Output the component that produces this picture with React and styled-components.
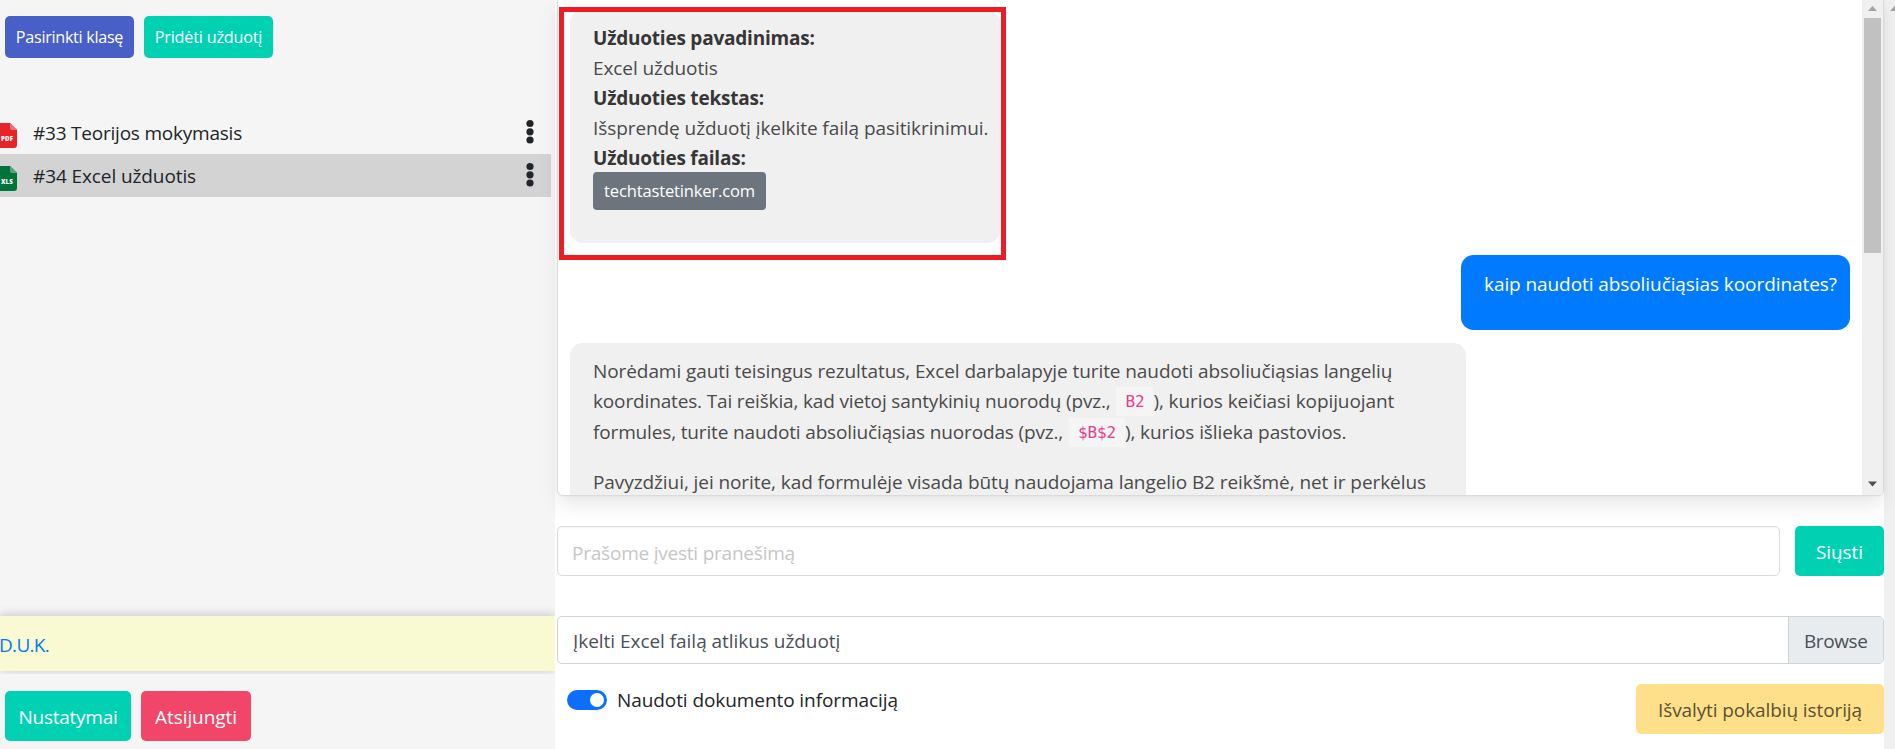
import React from "react";
import styled, { createGlobalStyle, css } from "styled-components";

const GlobalStyle = createGlobalStyle`
  *, *::before, *::after { box-sizing: border-box; }
  html, body { margin: 0; height: 100%; overflow: hidden; }
  body {
    background: #fff;
    color: #212529;
    font: 400 19px/30px "Open Sans", "Noto Sans", sans-serif;
    letter-spacing: -0.08px;
  }
  p { margin: 0; }
`;

const Page = styled.div`
  display: grid;
  grid-template-columns: 555px 1fr 11px;
  width: 100vw;
  height: 749px;
  overflow: hidden;
`;

const Sidebar = styled.aside`
  display: flex;
  flex-direction: column;
  background: #f5f5f5;
`;

const Toolbar = styled.div`
  display: flex;
  gap: 10px;
  padding: 16px 5px 0;
`;

const tones = {
  link: css`background: #485fc7; color: #fff;`,
  primary: css`background: #00d1b2; color: #fff;`,
  danger: css`background: #f14668; color: #fff;`,
  warning: css`background: #ffe08a; color: #5c5030;`,
};

const Button = styled.button`
  display: flex;
  align-items: center;
  justify-content: center;
  flex: none;
  width: ${(p) => p.$width}px;
  height: ${(p) => (p.$small ? 42 : 50)}px;
  padding: ${(p) => (p.$small ? 0 : "1px 0 0")};
  border: 0;
  border-radius: 5px;
  font: inherit;
  font-size: ${(p) => (p.$small ? 16.2 : 19)}px;
  letter-spacing: ${(p) => p.$tracking ?? -0.08}px;
  white-space: nowrap;
  ${(p) => tones[p.$tone]}
`;

const TaskList = styled.ul`
  flex: 1;
  margin: 54px 0 0;
  padding: 0;
  list-style: none;
`;

const Task = styled.li`
  display: flex;
  align-items: center;
  width: 551px;
  height: ${(p) => (p.$selected ? 43 : 42)}px;
  padding-right: 16px;
  letter-spacing: ${(p) => p.$tracking}px;
  background: ${(p) => (p.$selected ? "#d3d3d3" : "transparent")};
`;

const TaskName = styled.span`
  flex: 1;
  padding-left: 16px;
`;

const FileIconSvg = styled.svg`
  display: block;
  flex: none;
  width: 17px;
  height: 25px;
  margin-top: 5px;
`;

const DotsSvg = styled.svg`
  display: block;
  flex: none;
  width: 10px;
  height: 26px;
  margin-bottom: 2px;
`;

const Faq = styled.div`
  height: 55px;
  padding: 14px 0 0;
  background: #fafad2;
  box-shadow: 0 -1px 10px rgba(0, 0, 0, 0.2);
  clip-path: inset(-12px 0 -3px 0);
`;

const FaqLink = styled.a`
  margin-left: -1px;
  color: #007bff;
  letter-spacing: -0.7px;
`;

const AccountBar = styled.div`
  display: flex;
  gap: 10px;
  height: 78px;
  padding: 20px 5px 0;
`;

const Main = styled.main`
  position: relative;
  display: flex;
  flex-direction: column;
  padding-left: 2px;
`;

const ChatBox = styled.section`
  display: grid;
  grid-template-columns: 1fr 21px;
  flex: none;
  height: 501px;
  margin-top: -5px;
  padding-top: 4px;
  overflow: hidden;
  background: #fff;
  border: 1px solid #dbdbdb;
  border-radius: 6px;
  box-shadow: 0 10px 20px -2px rgba(10, 10, 10, 0.1), 0 0 0 1px rgba(10, 10, 10, 0.02);
`;

const Messages = styled.div`
  display: flex;
  flex-direction: column;
  align-items: flex-start;
  gap: 12px;
  height: 495px;
  padding: 10px 12px 0;
  overflow: hidden;
`;

const Bubble = styled.article`
  flex: none;
  width: ${(p) => p.$width}px;
  height: ${(p) => p.$height}px;
  align-self: ${(p) => (p.$own ? "flex-end" : "flex-start")};
  margin-bottom: ${(p) => (p.$own ? 1 : 0)}px;
  padding: ${(p) => (p.$own ? 14 : 13)}px 0 0 23px;
  border-radius: 12.5px;
  white-space: nowrap;
  background: ${(p) => (p.$own ? "#007bff" : "#f0f0f0")};
  color: ${(p) => (p.$own ? "#fff" : "#4a4a4a")};
`;

const Label = styled.strong`
  display: block;
  color: #363636;
  font-weight: 700;
  letter-spacing: -0.22px;
`;

const FileButton = styled.button`
  display: block;
  width: 173px;
  height: 38px;
  margin-top: -1px;
  padding: 0;
  border: 0;
  border-radius: 4px;
  background: #6c757d;
  color: #fff;
  font: inherit;
  font-size: 16.6px;
  letter-spacing: -0.18px;
`;

const Paragraph = styled.p`
  margin-bottom: 20px;
  line-height: 30.3px;
`;

const Tight = styled.span`
  letter-spacing: -0.15px;
`;

const Code = styled.code`
  display: inline-block;
  height: 29px;
  margin: 1px 0 0 1px;
  padding: 0 9px;
  vertical-align: top;
  background: #f5f5f5;
  color: #e83e8c;
  font: 16px/30px "DejaVu Sans Mono", monospace;
  letter-spacing: -0.15px;
`;

const Scrollbar = styled.div`
  display: flex;
  flex-direction: column;
  align-items: center;
  height: 495px;
  background: #f0f0f0;
`;

const ScrollArrow = styled.svg`
  display: block;
  flex: none;
  width: 9px;
  height: 18px;
`;

const ScrollThumb = styled.div`
  width: 17px;
  height: 235px;
  margin-bottom: auto;
  background: #c1c1c1;
`;

const Composer = styled.form`
  display: flex;
  gap: 15px;
  margin-top: 30px;
`;

const MessageInput = styled.input`
  flex: 1;
  height: 50px;
  padding: 3px 14px 0;
  border: 1px solid #dbdbdb;
  border-radius: 5px;
  box-shadow: inset 0 1px 2px rgba(10, 10, 10, 0.05);
  background: #fff;
  font: inherit;
  letter-spacing: -0.22px;
  &::placeholder { color: #c6c6c6; opacity: 1; }
`;

const FileField = styled.label`
  display: flex;
  height: 48px;
  margin-top: 40px;
  border: 1px solid #ced4da;
  border-radius: 5px;
  overflow: hidden;
  color: #495057;
  line-height: 48px;
`;

const FileName = styled.span`
  flex: 1;
  padding-left: 15px;
  letter-spacing: -0.04px;
`;

const Browse = styled.span`
  width: 95px;
  padding-left: 15px;
  border-left: 1px solid #ced4da;
  background: #e9ecef;
  letter-spacing: -0.4px;
`;

const Footer = styled.div`
  display: flex;
  align-items: flex-start;
  justify-content: space-between;
  margin-top: 20px;
`;

const SwitchLabel = styled.label`
  display: flex;
  align-items: center;
  gap: 10px;
  padding: 1px 0 0 10px;
`;

const Switch = styled.span`
  display: flex;
  align-items: center;
  justify-content: flex-end;
  width: 40px;
  height: 20px;
  padding-right: 3px;
  border-radius: 10px;
  background: #0d6efd;
  &::after {
    content: "";
    width: 14px;
    height: 14px;
    border-radius: 50%;
    background: #fff;
  }
`;

const Highlight = styled.div`
  position: absolute;
  top: 7px;
  left: 4px;
  width: 447px;
  height: 253px;
  border: 5px solid #ed1c24;
`;

const PageScrollbar = styled.div`
  padding-left: 6px;
  overflow: hidden;
  background: #f0f0f0;
`;

function FileIcon({ color, fold, label }) {
  return (
    <FileIconSvg viewBox="0 0 17 25">
      <path d="M0 0H10L17 7V22Q17 25 14 25H0Z" fill={color} />
      <path d="M10 0L17 7H12Q10 7 10 5Z" fill={fold} />
      <text x="1" y="18.3" fill="#fff" fontSize="6.2" fontWeight="800" letterSpacing="0.1">
        {label}
      </text>
    </FileIconSvg>
  );
}

function Dots() {
  return (
    <DotsSvg viewBox="0 0 10 26">
      {[4.5, 12.8, 21].map((y) => (
        <circle key={y} cx="5" cy={y} r="3.6" fill="#212529" />
      ))}
    </DotsSvg>
  );
}

function Arrow({ down }) {
  return (
    <ScrollArrow viewBox="0 0 9 18">
      <path d={down ? "M0 4.5H9L4.5 9.5Z" : "M0 11H9L4.5 6Z"} fill={down ? "#505050" : "#a3a3a3"} />
    </ScrollArrow>
  );
}

export default function App() {
  return (
    <>
      <GlobalStyle />
      <Page>
        <Sidebar>
          <Toolbar>
            <Button $tone="link" $small $width={129} $tracking={-0.3}>Pasirinkti klasę</Button>
            <Button $tone="primary" $small $width={129} $tracking={-0.2}>Pridėti užduotį</Button>
          </Toolbar>
          <TaskList>
            <Task $tracking={-0.22}>
              <FileIcon color="#e5252a" fold="#ee7074" label="PDF" />
              <TaskName>#33 Teorijos mokymasis</TaskName>
              <Dots />
            </Task>
            <Task $selected $tracking={-0.1}>
              <FileIcon color="#00733b" fold="#5ba27c" label="XLS" />
              <TaskName>#34 Excel užduotis</TaskName>
              <Dots />
            </Task>
          </TaskList>
          <Faq>
            <FaqLink>D.U.K.</FaqLink>
          </Faq>
          <AccountBar>
            <Button $tone="primary" $width={126} $tracking={-0.25}>Nustatymai</Button>
            <Button $tone="danger" $width={110}>Atsijungti</Button>
          </AccountBar>
        </Sidebar>
        <Main>
          <ChatBox>
            <Messages>
              <Bubble $width={430} $height={233}>
                <Label>Užduoties pavadinimas:</Label>
                <p>Excel užduotis</p>
                <Label>Užduoties tekstas:</Label>
                <p>Išsprendę užduotį įkelkite failą pasitikrinimui.</p>
                <Label>Užduoties failas:</Label>
                <FileButton>techtastetinker.com</FileButton>
              </Bubble>
              <Bubble $own $width={389} $height={75}>
                kaip naudoti absoliučiąsias koordinates?
              </Bubble>
              <Bubble $width={896} $height={260}>
                <Paragraph>
                  Norėdami gauti teisingus rezultatus, Excel darbalapyje turite naudoti absoliučiąsias langelių
                  <br />
                  <Tight>koordinates. Tai reiškia, kad vietoj santykinių nuorodų (pvz., </Tight>
                  <Code>B2</Code>), kurios keičiasi kopijuojant
                  <br />
                  <Tight>formules, turite naudoti absoliučiąsias nuorodas (pvz., </Tight>
                  <Code>$B$2</Code>), kurios išlieka pastovios.
                </Paragraph>
                <Paragraph>
                  Pavyzdžiui, jei norite, kad formulėje visada būtų naudojama langelio B2 reikšmė, net ir perkėlus
                </Paragraph>
              </Bubble>
            </Messages>
            <Scrollbar>
              <Arrow />
              <ScrollThumb />
              <Arrow down />
            </Scrollbar>
          </ChatBox>
          <Composer>
            <MessageInput placeholder="Prašome įvesti pranešimą" />
            <Button type="button" $tone="primary" $width={89}>Siųsti</Button>
          </Composer>
          <FileField>
            <FileName>Įkelti Excel failą atlikus užduotį</FileName>
            <Browse>Browse</Browse>
          </FileField>
          <Footer>
            <SwitchLabel>
              <Switch />
              Naudoti dokumento informaciją
            </SwitchLabel>
            <Button $tone="warning" $width={248} $tracking={-0.1}>Išvalyti pokalbių istoriją</Button>
          </Footer>
          <Highlight />
        </Main>
        <PageScrollbar>
          <Arrow />
        </PageScrollbar>
      </Page>
    </>
  );
}
